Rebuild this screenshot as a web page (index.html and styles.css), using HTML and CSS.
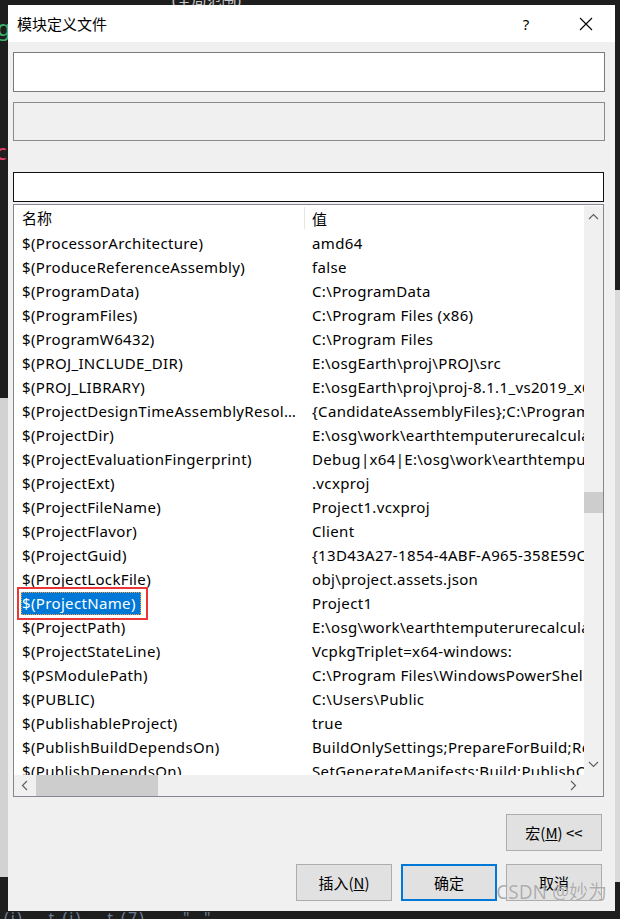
FILE: index.html
```html
<!DOCTYPE html>
<html>
<head>
  <meta charset="utf-8">
  <link rel="stylesheet" href="styles.css">
</head>
<body>
  <!-- bits of the IDE behind the dialog -->
  <span class="bg-frag frag-top">(全局范围)</span>
  <span class="bg-frag frag-g">g</span>
  <span class="bg-frag frag-c">c</span>
  <span class="bg-frag frag-bottom">(i)  ..t (i)  ..t (7)  ..  "  "</span>

  <div class="dialog">
    <div class="titlebar">
      <span class="title">模块定义文件</span>
      <div class="caption-btns">
        <span class="cap-btn help">?</span>
        <span class="cap-btn close">
          <svg width="14" height="14" viewBox="0 0 14 14"><path d="M1 1 L13 13 M13 1 L1 13" stroke="#000" stroke-width="1.1" fill="none"/></svg>
        </span>
      </div>
    </div>

    <div class="content">
      <div class="field field-edit"></div>
      <div class="field field-readonly"></div>
      <div class="field field-filter"></div>

      <div class="listview">
        <div class="lv-main">
          <div class="lv-table">
            <div class="lv-head">
              <div class="col-name">名称</div>
              <div class="col-val">值</div>
            </div>
            <div class="lv-rows">
              <div class="row"><div class="col-name">$(ProcessorArchitecture)</div><div class="col-val">amd64</div></div>
              <div class="row"><div class="col-name">$(ProduceReferenceAssembly)</div><div class="col-val">false</div></div>
              <div class="row"><div class="col-name">$(ProgramData)</div><div class="col-val">C:\ProgramData</div></div>
              <div class="row"><div class="col-name">$(ProgramFiles)</div><div class="col-val">C:\Program Files (x86)</div></div>
              <div class="row"><div class="col-name">$(ProgramW6432)</div><div class="col-val">C:\Program Files</div></div>
              <div class="row"><div class="col-name">$(PROJ_INCLUDE_DIR)</div><div class="col-val">E:\osgEarth\proj\PROJ\src</div></div>
              <div class="row"><div class="col-name">$(PROJ_LIBRARY)</div><div class="col-val">E:\osgEarth\proj\proj-8.1.1_vs2019_x64\lib\proj.lib</div></div>
              <div class="row"><div class="col-name">$(ProjectDesignTimeAssemblyResolutionSearchPaths)</div><div class="col-val">{CandidateAssemblyFiles};C:\Program Files (x86)\Microsoft</div></div>
              <div class="row"><div class="col-name">$(ProjectDir)</div><div class="col-val">E:\osg\work\earthtemputerurecalculate\Project1\</div></div>
              <div class="row"><div class="col-name">$(ProjectEvaluationFingerprint)</div><div class="col-val">Debug|x64|E:\osg\work\earthtemputerurecalculate\</div></div>
              <div class="row"><div class="col-name">$(ProjectExt)</div><div class="col-val">.vcxproj</div></div>
              <div class="row"><div class="col-name">$(ProjectFileName)</div><div class="col-val">Project1.vcxproj</div></div>
              <div class="row"><div class="col-name">$(ProjectFlavor)</div><div class="col-val">Client</div></div>
              <div class="row"><div class="col-name">$(ProjectGuid)</div><div class="col-val">{13D43A27-1854-4ABF-A965-358E59C2A1F0}</div></div>
              <div class="row"><div class="col-name">$(ProjectLockFile)</div><div class="col-val">obj\project.assets.json</div></div>
              <div class="row"><div class="col-name"><span class="sel">$(ProjectName)</span></div><div class="col-val">Project1</div></div>
              <div class="row"><div class="col-name">$(ProjectPath)</div><div class="col-val">E:\osg\work\earthtemputerurecalculate\Project1\</div></div>
              <div class="row"><div class="col-name">$(ProjectStateLine)</div><div class="col-val">VcpkgTriplet=x64-windows:</div></div>
              <div class="row"><div class="col-name">$(PSModulePath)</div><div class="col-val">C:\Program Files\WindowsPowerShell\Modules</div></div>
              <div class="row"><div class="col-name">$(PUBLIC)</div><div class="col-val">C:\Users\Public</div></div>
              <div class="row"><div class="col-name">$(PublishableProject)</div><div class="col-val">true</div></div>
              <div class="row"><div class="col-name">$(PublishBuildDependsOn)</div><div class="col-val">BuildOnlySettings;PrepareForBuild;ResolveReferences</div></div>
              <div class="row"><div class="col-name">$(PublishDependsOn)</div><div class="col-val">SetGenerateManifests;Build;PublishOnly</div></div>
            </div>
          </div>
          <div class="vscroll">
            <svg class="arrow" width="19" height="22" viewBox="0 0 19 22"><path d="M5 13 L9.5 8.5 L14 13" stroke="#606060" stroke-width="1.2" fill="none"/></svg>
            <div class="vtrack"><div class="vthumb"></div></div>
            <svg class="arrow" width="19" height="22" viewBox="0 0 19 22"><path d="M5 9 L9.5 13.5 L14 9" stroke="#606060" stroke-width="1.2" fill="none"/></svg>
          </div>
        </div>
        <div class="hscroll-row">
          <div class="hscroll">
            <svg class="arrow" width="22" height="21" viewBox="0 0 22 21"><path d="M13 6 L8.5 10.5 L13 15" stroke="#606060" stroke-width="1.2" fill="none"/></svg>
            <div class="htrack"><div class="hthumb"></div></div>
            <svg class="arrow" width="22" height="21" viewBox="0 0 22 21"><path d="M9 6 L13.5 10.5 L9 15" stroke="#606060" stroke-width="1.2" fill="none"/></svg>
          </div>
          <div class="corner"></div>
        </div>
      </div>

      <div class="btn-row macro-row">
        <button>宏(<u>M</u>) &lt;&lt;</button>
      </div>
      <div class="btn-row bottom-row">
        <button>插入(<u>N</u>)</button>
        <button class="default">确定</button>
        <button>取消</button>
      </div>
    </div>

    <span class="watermark">CSDN @妙为</span>
  </div>
</body>
</html>
```

FILE: styles.css
```css
* { box-sizing: border-box; }

body {
  margin: 0;
  padding: 5px 5px 8px 8px;
  width: 620px;
  height: 919px;
  overflow: hidden;
  font-family: "Noto Sans", "Noto Sans CJK SC", sans-serif;
  font-size: 15px;
  color: #000;
  background:
    linear-gradient(to bottom, #1e1e1e 0 398px, #d2d2d2 398px 877px, #1e1e1e 877px) left top / 8px 100% no-repeat,
    linear-gradient(to bottom, #1e1e1e 0 290px, #dadada 290px 882px, #1e1e1e 882px) right top / 5px 100% no-repeat,
    #1e1e1e;
}

.bg-frag {
  position: absolute;
  font-family: "Noto Sans", "Noto Sans CJK SC", sans-serif;
  white-space: pre;
}
.frag-top { left: 172px; top: -12px; font-size: 15px; color: #c8c8c8; }
.frag-g { left: -3px; top: 12px; font-size: 22px; color: #3cb371; }
.frag-c { left: -4px; top: 136px; font-size: 22px; color: #e0406a; }
.frag-bottom { left: 4px; top: 907px; font-size: 16px; color: #6a7f95; letter-spacing: 2px; }

.dialog {
  position: relative;
  width: 607px;
  height: 906px;
  background: #f0f0f0;
  display: flex;
  flex-direction: column;
}

.titlebar {
  height: 37px;
  background: #fff;
  display: flex;
  align-items: center;
  justify-content: space-between;
}
.title {
  padding-left: 9px;
  font-family: "Noto Sans CJK SC", sans-serif;
  font-size: 15px;
}
.caption-btns { display: flex; height: 100%; }
.cap-btn {
  display: flex;
  align-items: center;
  justify-content: center;
  width: 58px;
  height: 100%;
}
.help { font-size: 15px; font-family: "Noto Sans", sans-serif; }
.close { width: 60px; padding-left: 2px; padding-right: 0; }

.content {
  flex: 1;
  padding: 10px 10px 10px 5px;
  display: flex;
  flex-direction: column;
}

.field { border: 1px solid #7a7a7a; }
.field-edit { height: 40px; background: #fff; margin-bottom: 10px; }
.field-readonly { height: 39px; background: #f0f0f0; border-color: #8a8a8a; margin-bottom: 31px; }
.field-filter { height: 30px; background: #fff; border-color: #111; margin-bottom: 2px; margin-right: 1px; }

.listview {
  height: 593px;
  margin-right: 1px;
  border: 1px solid #828790;
  background: #fff;
  display: flex;
  flex-direction: column;
}
.lv-main { display: flex; height: 570px; }
.lv-table { flex: 1; overflow: hidden; letter-spacing: 0.35px; }

.lv-head, .row { display: flex; white-space: nowrap; }
.lv-head { height: 26px; align-items: center; font-family: "Noto Sans CJK SC", sans-serif; letter-spacing: 0; }
.lv-head .col-name { border-right: 1px solid #e5e5e5; height: 22px; line-height: 22px; }
.row { height: 24px; align-items: center; }

.col-name {
  flex: 0 0 291px;
  padding-left: 8px;
  padding-right: 4px;
  overflow: hidden;
  text-overflow: ellipsis;
}
.col-val {
  flex: 0 0 auto;
  padding-left: 7px;
}

.sel {
  position: relative;
  display: inline-block;
  margin-left: -1px;
  padding: 0 5px 0 1px;
  line-height: 23px;
  background: #0078d7;
  color: #fff;
  outline: 1px dotted #f0a040;
  outline-offset: -1px;
}
/* red annotation box */
.sel::after {
  content: "";
  position: absolute;
  left: -4px;
  top: -5px;
  right: -7px;
  bottom: -5px;
  border: 2px solid #ec3535;
}
.col-name:has(.sel) { overflow: visible; }

.vscroll {
  width: 19px;
  margin-top: 1px;
  background: #f0f0f0;
  display: flex;
  flex-direction: column;
}
.vtrack { flex: 1; padding-top: 264px; }
.vthumb { height: 21px; background: #cdcdcd; }

.hscroll-row { display: flex; height: 21px; }
.hscroll {
  flex: 1;
  background: #f0f0f0;
  display: flex;
}
.htrack { flex: 1; }
.hthumb { width: 122px; height: 100%; background: #cdcdcd; }
.corner { width: 19px; background: #f0f0f0; }

.btn-row {
  display: flex;
  justify-content: flex-end;
  gap: 9px;
  padding-right: 3px;
}
.macro-row { margin-top: 17px; }
.bottom-row { margin-top: 13px; }

button {
  width: 96px;
  height: 37px;
  background: #e1e1e1;
  border: 1px solid #adadad;
  border-radius: 0;
  font-family: "Noto Sans CJK SC", sans-serif;
  font-size: 15px;
  color: #000;
  padding: 0;
}
button.default { border: 2px solid #0078d7; }

.watermark {
  position: absolute;
  right: 8px;
  bottom: 6px;
  font-family: "Noto Sans", "Noto Sans CJK SC", sans-serif;
  font-size: 19px;
  color: rgba(140, 140, 140, 0.7);
  text-shadow: 0 0 1px rgba(255, 255, 255, 0.8);
}
```
